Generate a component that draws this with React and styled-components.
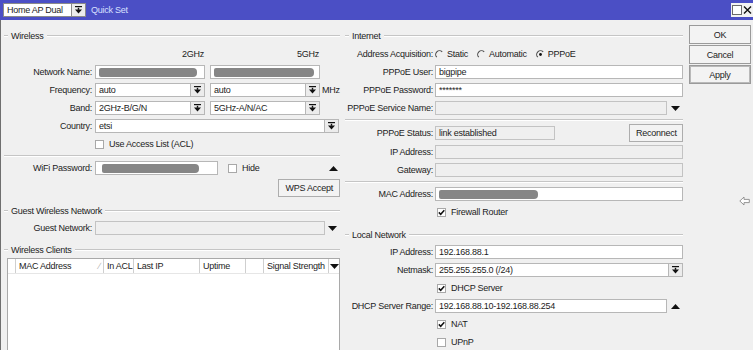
import React from 'react';
import styled, { createGlobalStyle } from 'styled-components';

const GlobalStyle = createGlobalStyle`
  html, body {
    margin: 0;
    padding: 0;
    background: #f0f0f0;
  }
  body {
    font-family: "Liberation Sans", Arial, sans-serif;
    font-size: 9px;
    letter-spacing: -0.25px;
    color: #1c1c1c;
  }
`;

const Window = styled.div`
  width: 753px;
  height: 350px;
  overflow: hidden;
  display: flex;
  flex-direction: column;
  background: #f0f0f0;
`;

const TitleBar = styled.div`
  flex: none;
  height: 20px;
  display: flex;
  align-items: center;
  padding-left: 3px;
  background: #4b4fc5;
`;

const ProfileValue = styled.div`
  width: 69px;
  height: 14px;
  box-sizing: border-box;
  display: flex;
  align-items: center;
  padding-left: 3px;
  background: #fff;
  border: 1px solid #8a8a8a;
`;

const TitleText = styled.span`
  margin-left: 5px;
  color: #d9e0ff;
`;

const WinControls = styled.div`
  margin-left: auto;
  height: 14px;
  display: flex;
  align-items: center;
  gap: 1px;
  padding: 0 1px;
  background: #f2f2f2;
`;

const Body = styled.div`
  flex: 1;
  display: flex;
  border-left: 1px solid #6f6f6f;
  min-height: 0;
`;

const Pane = styled.div`
  width: ${(p) => p.$width}px;
  flex: none;
  box-sizing: border-box;
  padding: 9px 3px 0 ${(p) => p.$pl}px;
  display: flex;
  flex-direction: column;
`;

const ButtonColumn = styled.div`
  flex: 1;
  display: flex;
  flex-direction: column;
  padding: 5px 2px 0 3px;
`;

const LegendRow = styled.div`
  height: 14px;
  flex: none;
  display: flex;
  align-items: center;
  margin-top: ${(p) => p.$mt || 0}px;
`;

const Etched = styled.div`
  height: 0;
  flex: ${(p) => (p.$w ? 'none' : 1)};
  width: ${(p) => (p.$w ? `${p.$w}px` : 'auto')};
  border-top: 1px solid #c5c5c5;
  border-bottom: 1px solid #ffffff;
`;

const LegendText = styled.span`
  padding: 0 3px;
  white-space: nowrap;
`;

const Separator = styled.div`
  height: 6px;
  flex: none;
  display: flex;
  align-items: center;
`;

const Row = styled.div`
  height: ${(p) => p.$h || 18}px;
  flex: none;
  margin-top: ${(p) => p.$mt || 0}px;
  display: grid;
  grid-template-columns: 88px 1fr;
  column-gap: ${(p) => p.$gap}px;
  align-items: center;
`;

const Label = styled.span`
  text-align: right;
  white-space: nowrap;
`;

const Field = styled.div`
  display: flex;
  align-items: center;
  min-width: 0;
`;

const Pair = styled.div`
  display: grid;
  grid-template-columns: 110px 110px auto;
  column-gap: 5px;
  align-items: center;
`;

const BandName = styled.span`
  text-align: right;
  padding-right: 1px;
`;

const Input = styled.div`
  width: ${(p) => (p.$w ? `${p.$w}px` : 'auto')};
  flex: ${(p) => (p.$w ? 'none' : 1)};
  height: 14px;
  box-sizing: border-box;
  display: flex;
  align-items: center;
  padding-left: 3px;
  overflow: hidden;
  white-space: nowrap;
  background: ${(p) => (p.$disabled ? '#efefef' : '#ffffff')};
  border: 1px solid ${(p) => (p.$disabled ? '#c3c3c3' : '#b7b7b7')};
`;

const ComboBox = styled.div`
  display: flex;
  width: ${(p) => (p.$w ? `${p.$w}px` : 'auto')};
  flex: ${(p) => (p.$w ? 'none' : 1)};
`;

const DropButton = styled.div`
  width: 14px;
  height: 14px;
  flex: none;
  box-sizing: border-box;
  display: flex;
  align-items: center;
  justify-content: center;
  background: #ececec;
  border: 1px solid ${(p) => p.$border || '#b7b7b7'};
  border-left: none;
`;

const Blob = styled.span`
  display: block;
  flex: none;
  width: ${(p) => p.$w}px;
  height: 9px;
  margin-left: ${(p) => p.$x || 0}px;
  border-radius: 2px 4px 4px 2px;
  background: #868686;
  filter: blur(0.6px);
`;

const Unit = styled.span`
  margin-left: -3px;
`;

const Arrow = styled.span`
  display: flex;
  margin-left: auto;
  margin-right: ${(p) => p.$mr || 0}px;
`;

const CheckItem = styled.label`
  display: inline-flex;
  align-items: center;
  gap: 5px;
  margin-left: ${(p) => p.$ml || 0}px;
`;

const Box = styled.span`
  width: 9px;
  height: 9px;
  box-sizing: border-box;
  display: flex;
  align-items: center;
  justify-content: center;
  background: #fff;
  border: 1px solid #a8a8a8;
`;

const RadioItem = styled.span`
  display: inline-flex;
  align-items: center;
  gap: 3px;
  margin-right: 9px;
`;

const Button = styled.button`
  height: ${(p) => p.$h || 18}px;
  width: ${(p) => (p.$w ? `${p.$w}px` : 'auto')};
  box-sizing: border-box;
  margin: 0;
  padding: 0 6px;
  font: inherit;
  letter-spacing: inherit;
  color: #1c1c1c;
  background: #f3f3f3;
  border: 1px solid ${(p) => (p.$dark ? '#9a9a9a' : '#adadad')};
  box-shadow: ${(p) => (p.$default ? 'inset 0 0 0 1px #b9b9b9' : 'none')};
  border-radius: 0;
  margin-left: ${(p) => (p.$right ? 'auto' : '0')};
  flex: none;
`;

const SideButtons = styled.div`
  display: flex;
  flex-direction: column;
  gap: 1px;
`;

const PointerIcon = styled.span`
  align-self: flex-end;
  margin-top: 112px;
  margin-right: 1px;
  display: flex;
`;

const Table = styled.div`
  flex: 1;
  margin: 1px 0 0 3px;
  background: #ffffff;
  border: 1px solid #a9a9a9;
  border-bottom: none;
`;

const HeaderRow = styled.div`
  height: 14px;
  display: grid;
  grid-template-columns: 8px 88px 30px 66px 46px 18px 65px 1fr;
  border-bottom: 1px solid #e6e6e6;
`;

const HeaderCell = styled.div`
  display: flex;
  align-items: center;
  padding-left: ${(p) => (p.$center ? 0 : 3)}px;
  justify-content: ${(p) => (p.$center ? 'center' : 'flex-start')};
  border-right: ${(p) => (p.$last ? 'none' : '1px solid #cfcfcf')};
  white-space: nowrap;
  overflow: hidden;
`;

const SortMark = styled.span`
  margin-left: auto;
  margin-right: 3px;
  color: #b0b0b0;
`;

const DropGlyph = () => (
  <svg width="7" height="8" viewBox="0 0 7 8">
    <rect x="0" y="0" width="7" height="1.2" fill="#111" />
    <rect x="2.8" y="1.8" width="1.4" height="2" fill="#111" />
    <path d="M0 3.6h7L3.5 7.6z" fill="#111" />
  </svg>
);

const Triangle = ({ up }) => (
  <svg width="9" height="5" viewBox="0 0 9 5">
    <path d={up ? 'M0 5h9L4.5 0z' : 'M0 0h9L4.5 5z'} fill="#111" />
  </svg>
);

const Radio = ({ checked }) => (
  <svg width="9" height="9" viewBox="0 0 9 9">
    <path d="M1.8 7.2A3.8 3.8 0 0 1 7.2 1.8" fill="none" stroke="#4b4b4b" strokeWidth="1.1" />
    {checked && <circle cx="4.5" cy="4.5" r="1.4" fill="#111" />}
  </svg>
);

const Check = ({ checked, label, ml }) => (
  <CheckItem $ml={ml}>
    <Box>
      {checked && (
        <svg width="7" height="7" viewBox="0 0 7 7">
          <path d="M0.8 3.4L2.7 5.3L6.3 1.2" fill="none" stroke="#111" strokeWidth="1.5" />
        </svg>
      )}
    </Box>
    {label}
  </CheckItem>
);

const Combo = ({ value, w }) => (
  <ComboBox $w={w}>
    <Input>{value}</Input>
    <DropButton>
      <DropGlyph />
    </DropButton>
  </ComboBox>
);

const Legend = ({ text, mt }) => (
  <LegendRow $mt={mt}>
    <Etched $w={4} />
    <LegendText>{text}</LegendText>
    <Etched />
  </LegendRow>
);

const Sep = () => (
  <Separator>
    <Etched />
  </Separator>
);

const FormRow = ({ label, gap, mt, h, children }) => (
  <Row $gap={gap} $mt={mt} $h={h}>
    <Label>{label}</Label>
    <Field>{children}</Field>
  </Row>
);

const LeftRow = (props) => <FormRow gap={3} {...props} />;
const RightRow = (props) => <FormRow gap={2} {...props} />;

const columns = [
  { key: 'sel', text: '' },
  { key: 'mac', text: 'MAC Address', sort: true },
  { key: 'acl', text: 'In ACL' },
  { key: 'ip', text: 'Last IP' },
  { key: 'up', text: 'Uptime' },
  { key: 'blank', text: '' },
  { key: 'sig', text: 'Signal Strength' },
];

const App = () => (
  <>
    <GlobalStyle />
    <Window>
      <TitleBar>
        <ProfileValue>Home AP Dual</ProfileValue>
        <DropButton $border="#8a8a8a">
          <DropGlyph />
        </DropButton>
        <TitleText>Quick Set</TitleText>
        <WinControls>
          <svg width="10" height="10" viewBox="0 0 10 10">
            <rect x="0.5" y="0.5" width="9" height="9" fill="#fff" stroke="#6a6a6a" />
          </svg>
          <svg width="9" height="10" viewBox="0 0 9 10">
            <path d="M1 1.5L8 8.5M8 1.5L1 8.5" stroke="#111" strokeWidth="1.4" />
          </svg>
        </WinControls>
      </TitleBar>

      <Body>
        <Pane $width={342} $pl={3}>
          <Legend text="Wireless" />
          <LeftRow mt={2}>
            <Pair>
              <BandName>2GHz</BandName>
              <BandName>5GHz</BandName>
            </Pair>
          </LeftRow>
          <LeftRow label="Network Name:">
            <Pair>
              <Input>
                <Blob $w={98} />
              </Input>
              <Input>
                <Blob $w={100} />
              </Input>
            </Pair>
          </LeftRow>
          <LeftRow label="Frequency:">
            <Pair>
              <Combo value="auto" />
              <Combo value="auto" />
              <Unit>MHz</Unit>
            </Pair>
          </LeftRow>
          <LeftRow label="Band:">
            <Pair>
              <Combo value="2GHz-B/G/N" />
              <Combo value="5GHz-A/N/AC" />
            </Pair>
          </LeftRow>
          <LeftRow label="Country:">
            <Combo value="etsi" w={244} />
          </LeftRow>
          <LeftRow>
            <Check label="Use Access List (ACL)" />
          </LeftRow>
          <Sep />
          <LeftRow label="WiFi Password:">
            <Input $w={123}>
              <Blob $w={97} $x={3} />
            </Input>
            <Check label="Hide" ml={10} />
            <Arrow $mr={2}>
              <Triangle up />
            </Arrow>
          </LeftRow>
          <LeftRow h={20} mt={1}>
            <Button $right>WPS Accept</Button>
          </LeftRow>
          <Legend text="Guest Wireless Network" mt={6} />
          <LeftRow label="Guest Network:" mt={1}>
            <Input $w={230} $disabled />
            <Arrow $mr={3}>
              <Triangle />
            </Arrow>
          </LeftRow>
          <Legend text="Wireless Clients" mt={6} />
          <Table>
            <HeaderRow>
              {columns.map((c) => (
                <HeaderCell key={c.key}>
                  {c.text}
                  {c.sort && <SortMark>∕</SortMark>}
                </HeaderCell>
              ))}
              <HeaderCell $center $last>
                <Triangle />
              </HeaderCell>
            </HeaderRow>
          </Table>
        </Pane>

        <Pane $width={343} $pl={2}>
          <Legend text="Internet" />
          <RightRow label="Address Acquisition:" mt={2}>
            <RadioItem>
              <Radio />
              Static
            </RadioItem>
            <RadioItem>
              <Radio />
              Automatic
            </RadioItem>
            <RadioItem>
              <Radio checked />
              PPPoE
            </RadioItem>
          </RightRow>
          <RightRow label="PPPoE User:">
            <Input>bigpipe</Input>
          </RightRow>
          <RightRow label="PPPoE Password:">
            <Input>*******</Input>
          </RightRow>
          <RightRow label="PPPoE Service Name:">
            <Input $w={232} $disabled />
            <Arrow $mr={3}>
              <Triangle />
            </Arrow>
          </RightRow>
          <Sep />
          <RightRow label="PPPoE Status:" h={20}>
            <Input $w={120} $disabled>
              link established
            </Input>
            <Button $right $w={54}>
              Reconnect
            </Button>
          </RightRow>
          <RightRow label="IP Address:">
            <Input $disabled />
          </RightRow>
          <RightRow label="Gateway:">
            <Input $disabled />
          </RightRow>
          <Sep />
          <RightRow label="MAC Address:">
            <Input>
              <Blob $w={99} />
            </Input>
          </RightRow>
          <RightRow>
            <Check checked label="Firewall Router" ml={2} />
          </RightRow>
          <Legend text="Local Network" mt={7} />
          <RightRow label="IP Address:" mt={1}>
            <Input>192.168.88.1</Input>
          </RightRow>
          <RightRow label="Netmask:">
            <Combo value="255.255.255.0 (/24)" />
          </RightRow>
          <RightRow>
            <Check checked label="DHCP Server" ml={2} />
          </RightRow>
          <RightRow label="DHCP Server Range:">
            <Input $w={232}>192.168.88.10-192.168.88.254</Input>
            <Arrow $mr={3}>
              <Triangle up />
            </Arrow>
          </RightRow>
          <RightRow>
            <Check checked label="NAT" ml={2} />
          </RightRow>
          <RightRow>
            <Check label="UPnP" ml={2} />
          </RightRow>
        </Pane>

        <ButtonColumn>
          <SideButtons>
            <Button $h={19} $dark>OK</Button>
            <Button $h={19} $dark>Cancel</Button>
            <Button $h={19} $dark $default>Apply</Button>
          </SideButtons>
          <PointerIcon>
            <svg width="11" height="10" viewBox="0 0 11 10">
              <path d="M0.8 5L5 1v2.4h5.3v3.2H5V9z" fill="#fff" stroke="#8a8a8a" strokeWidth="0.9" />
            </svg>
          </PointerIcon>
        </ButtonColumn>
      </Body>
    </Window>
  </>
);

export default App;
